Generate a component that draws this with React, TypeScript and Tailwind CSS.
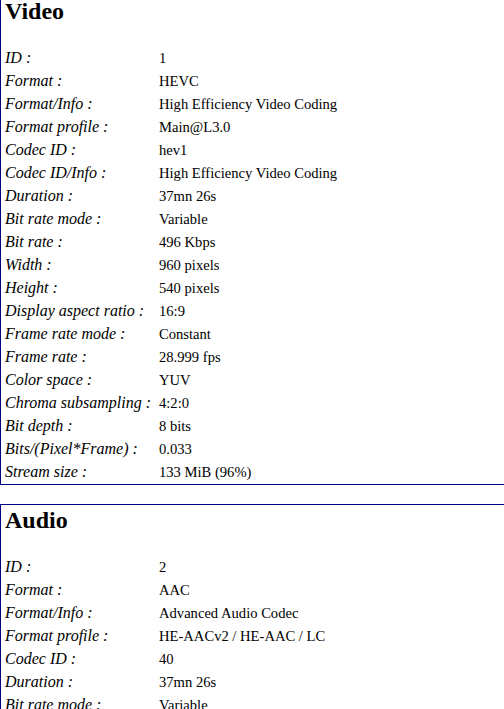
const video: [string, string][] = [
  ["ID", "1"],
  ["Format", "HEVC"],
  ["Format/Info", "High Efficiency Video Coding"],
  ["Format profile", "Main@L3.0"],
  ["Codec ID", "hev1"],
  ["Codec ID/Info", "High Efficiency Video Coding"],
  ["Duration", "37mn 26s"],
  ["Bit rate mode", "Variable"],
  ["Bit rate", "496 Kbps"],
  ["Width", "960 pixels"],
  ["Height", "540 pixels"],
  ["Display aspect ratio", "16:9"],
  ["Frame rate mode", "Constant"],
  ["Frame rate", "28.999 fps"],
  ["Color space", "YUV"],
  ["Chroma subsampling", "4:2:0"],
  ["Bit depth", "8 bits"],
  ["Bits/(Pixel*Frame)", "0.033"],
  ["Stream size", "133 MiB (96%)"]
];

const audio: [string, string][] = [
  ["ID", "2"],
  ["Format", "AAC"],
  ["Format/Info", "Advanced Audio Codec"],
  ["Format profile", "HE-AACv2 / HE-AAC / LC"],
  ["Codec ID", "40"],
  ["Duration", "37mn 26s"],
  ["Bit rate mode", "Variable"],
  ["Bit rate", "19.6 Kbps"],
  ["Channel(s)", "2 channels"]
];

function Section({ title, rows }: { title: string; rows: [string, string][] }) {
  return (
    <div className="border-y border-l border-[#000080] pb-[1px]">
      <h2 className="mb-[21px] pl-[4px] pt-[2px] text-[24px] font-bold leading-[27px]">{title}</h2>
      {rows.map(([label, value]) => (
        <div key={label} className="flex h-[23px] items-baseline leading-[23px]">
          <div className="w-[158px] shrink-0 pl-[4px] italic">{label} :</div>
          <div className="whitespace-nowrap text-[14.6px]">{value}</div>
        </div>
      ))}
    </div>
  );
}

export default function App() {
  return (
    <div className="h-[709px] overflow-hidden bg-white font-[family-name:Liberation_Serif,serif] text-[16px] text-black">
      <div className="-mt-[5px] flex flex-col gap-[19px]">
        <Section title="Video" rows={video} />
        <Section title="Audio" rows={audio} />
      </div>
    </div>
  );
}
